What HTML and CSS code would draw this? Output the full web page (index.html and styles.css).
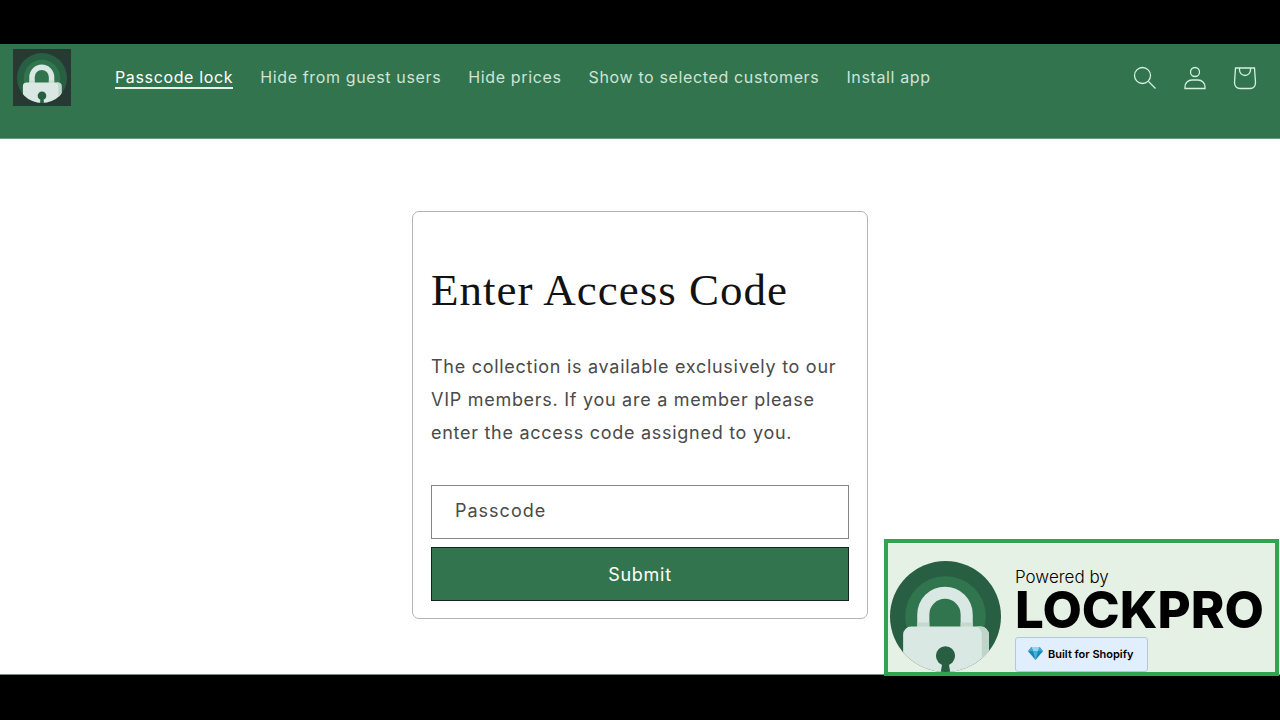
FILE: index.html
```html
<!DOCTYPE html>
<html lang="en">
<head>
  <meta charset="UTF-8">
  <meta name="viewport" content="width=device-width, initial-scale=1">
  <title>Passcode lock</title>
  <link rel="stylesheet" href="styles.css">
</head>
<body>
  <svg class="defs" aria-hidden="true">
    <symbol id="padlock" viewBox="0 0 110 110">
      <clipPath id="disc"><circle cx="55" cy="55" r="55"/></clipPath>
      <circle cx="55" cy="55" r="55" fill="#285f43"/>
      <circle cx="55" cy="55" r="40" fill="#31754e"/>
      <g clip-path="url(#disc)">
        <path d="M27 70V53a27.500 27.500 0 0 1 55 0v17H70V53a15.500 15.500 0 0 0-31 0v17z" fill="#d9e8e2"/>
        <path d="M27 61h12v5H27zM70 61h12v5H70z" fill="#c3d8cf"/>
        <rect x="13" y="65" width="85" height="60" rx="8" fill="#d9e8e2"/>
        <path d="M90 65a8 8 0 0 1 8 8v40h-7V73q0-5-5-8z" fill="#bfd4ca"/>
        <circle cx="55" cy="94" r="9.500" fill="#285f43"/>
        <path d="M52 100h6l2 12H50z" fill="#285f43"/>
      </g>
    </symbol>
  </svg>

  <div class="page">
    <header class="header">
      <a class="logo" href="#" aria-label="Home"><svg><use href="#padlock"/></svg></a>
      <nav class="nav">
        <a class="active" href="#">Passcode lock</a>
        <a href="#">Hide from guest users</a>
        <a href="#">Hide prices</a>
        <a href="#">Show to selected customers</a>
        <a href="#">Install app</a>
      </nav>
      <div class="icons">
        <button type="button" aria-label="Search">
          <svg viewBox="0 0 24 24"><circle cx="9.500" cy="9.500" r="8"/><path d="M15.500 15.500l7 7"/></svg>
        </button>
        <a href="#" aria-label="Log in">
          <svg viewBox="0 0 24 24"><circle cx="12" cy="6" r="4.500"/><path d="M2 22.500v-1.500c0-4 3-7 7-7h6c4 0 7 3 7 7v1.500z"/></svg>
        </a>
        <a href="#" aria-label="Cart">
          <svg viewBox="0 0 24 24"><path d="M2.500 2h19l1 14.500c0 4-2.500 6-5.500 6H7c-3 0-5.500-2-5.500-6z"/><path d="M6.500 2v2a5.500 5.500 0 0 0 11 0V2"/></svg>
        </a>
      </div>
    </header>

    <main class="main">
      <form class="card">
        <h1>Enter Access Code</h1>
        <p>The collection is available exclusively to our VIP members. If you are a member please enter the access code assigned to you.</p>
        <input type="text" placeholder="Passcode" aria-label="Passcode">
        <button type="submit">Submit</button>
      </form>
    </main>

    <aside class="badge">
      <svg class="badge-logo"><use href="#padlock"/></svg>
      <div class="badge-text">
        <span class="powered">Powered by</span>
        <strong>LOCKPRO</strong>
        <span class="built">
          <svg viewBox="0 0 16 14">
            <path d="M3.500 0h9L16 4.500 8 14 0 4.500z" fill="#1c84b5"/>
            <path d="M3.500 0h9l-2 4.500h-5z" fill="#8ed8f0"/>
            <path d="M3.500 0L0 4.500h5.500zM12.500 0L16 4.500h-5.500z" fill="#3fa9d3"/>
            <path d="M5.500 4.500h5L8 14z" fill="#45b5dc"/>
          </svg>
          Built for Shopify
        </span>
      </div>
    </aside>
  </div>
</body>
</html>
```
FILE: styles.css
```css
* { box-sizing: border-box; }
body {
  margin: 0; padding: 44px 0 45px;
  min-height: 100vh;
  display: flex; flex-direction: column;
  font-family: Inter, sans-serif;
  background: #000000;
}
.defs { position: absolute; width: 0; height: 0; }
.page {
  position: relative; flex: 1;
  display: flex; flex-direction: column;
  background: #ffffff;
  border-bottom: 1px solid #7d8a82;
}

/* header */
.header {
  display: flex; align-items: flex-start;
  padding: 5px 23px 32px 13px;
  background: #32744e;
  border-bottom: 1px solid #6a9a7e;
}
.logo {
  display: flex; width: 58px; height: 57px; padding: 4px;
  background: #263a33;
}
.logo svg { width: 50px; height: 50px; }
.nav { display: flex; gap: 27px; margin: 18px auto 0 44px; }
.nav a {
  font-size: 16px; line-height: 20px; letter-spacing: 0.04em;
  color: #cfe3d7; text-decoration: none;
  border-bottom: 2px solid transparent;
}
.nav a.active { color: #ffffff; border-bottom-color: #e6f5ec; }
.icons { display: flex; gap: 26px; margin-top: 17px; }
.icons a, .icons button {
  display: flex; padding: 0; border: none; background: none; cursor: pointer;
}
.icons svg { width: 24px; height: 24px; fill: none; stroke: #d5f0e0; stroke-width: 1.300; }

/* access form */
.main { flex: 1; display: flex; justify-content: center; align-items: flex-start; padding: 72px 20px 55px; }
.card {
  display: flex; flex-direction: column;
  width: 456px; padding: 48px 18px 17px;
  border: 1px solid #b4b4b4; border-radius: 7px;
}
.card h1 {
  margin: 0 0 30px;
  font-family: "Liberation Serif", serif; font-weight: 400;
  font-size: 45px; line-height: 60px; letter-spacing: 1px;
  color: #121212;
}
.card p {
  margin: 0 0 36px;
  font-size: 18px; line-height: 33px; letter-spacing: 0.04em;
  color: #4a4a4a;
}
.card input, .card button {
  width: 100%; height: 54px;
  font-family: inherit; font-size: 18px; letter-spacing: 0.04em;
  border-radius: 0;
}
.card input { padding: 0 23px 4px; margin-bottom: 8px; border: 1px solid #858585; background: #ffffff; color: #121212; letter-spacing: 1px; }
.card input::placeholder { color: #4a4a4a; opacity: 1; }
.card button { border: 1px solid #10281b; background: #32744e; color: #ffffff; cursor: pointer; }

/* powered by badge */
.badge {
  position: absolute; right: 1px; bottom: -2px;
  display: flex; gap: 14px;
  width: 395px; height: 137px; padding: 18px 0 0 2px;
  border: 4px solid #2fa551; background: #e6f1e5;
  box-shadow: inset 0 1px #ffffff;
  overflow: hidden;
}
.badge-logo { flex: none; width: 111px; height: 111px; }
.badge-text { display: flex; flex-direction: column; align-items: flex-start; padding-top: 6px; color: #000000; }
.powered { font-size: 17px; line-height: 20px; font-weight: 300; }
.badge-text strong { font-size: 51px; line-height: 46px; font-weight: 800; }
.built {
  display: flex; align-items: center; gap: 5px;
  height: 40px; margin-top: 4px; padding: 0 13px 2px 12px;
  font-size: 11px; font-weight: 600;
  border: 1px solid #b3c8d6; border-radius: 3px; background: #e1eefd;
}
.built svg { width: 15px; height: 13px; }
```
